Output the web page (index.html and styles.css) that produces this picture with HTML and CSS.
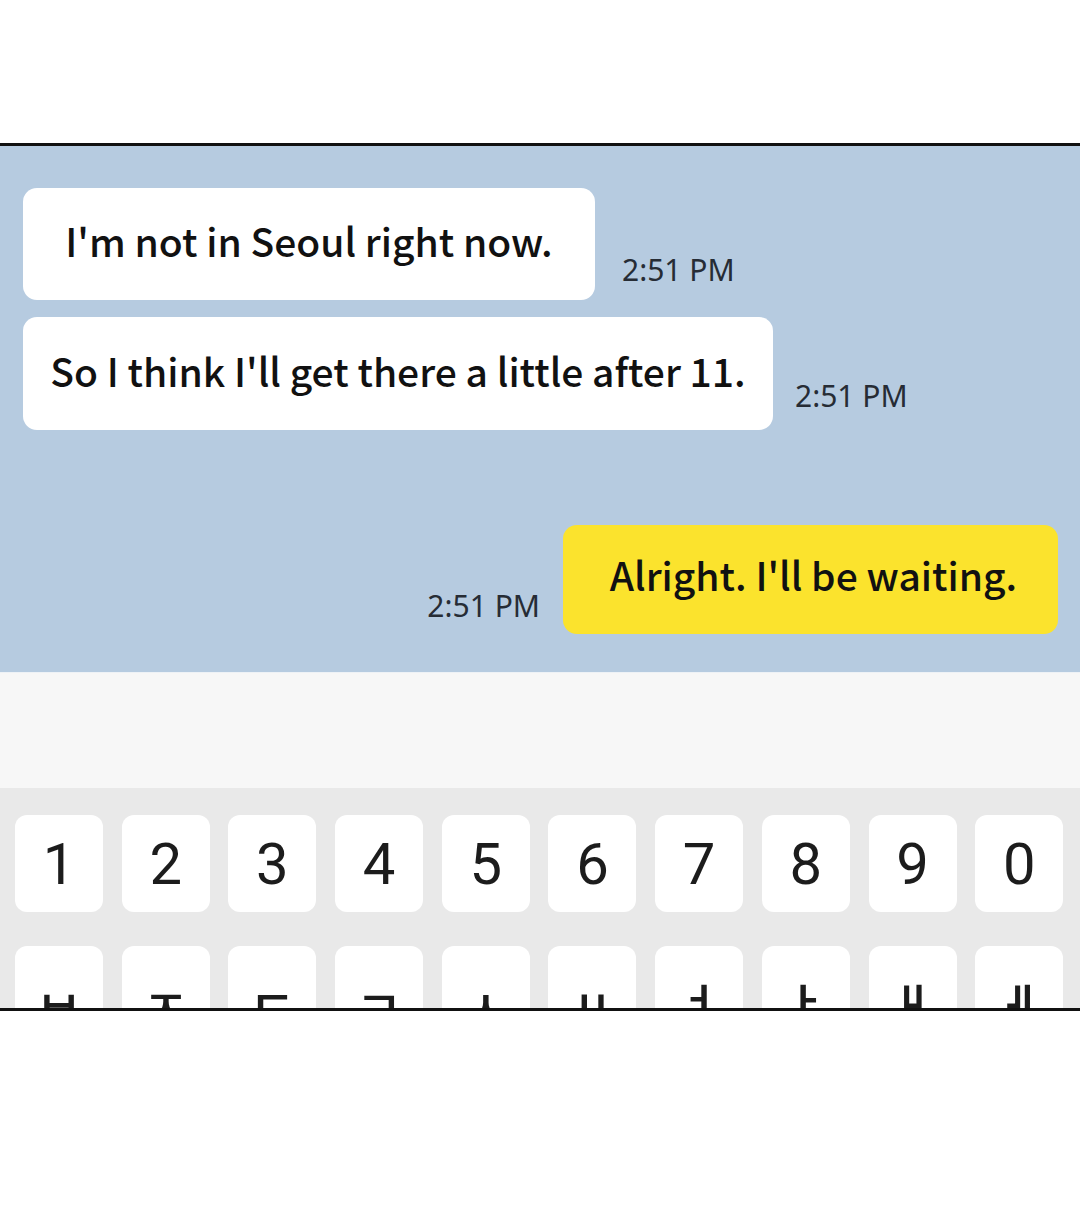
FILE: index.html
```html
<!DOCTYPE html>
<html>
<head>
<meta charset="utf-8">
<link rel="stylesheet" href="styles.css">
</head>
<body>
<div class="top"></div>
<div class="frame">
  <div class="chat">
    <div class="row row-1">
      <div class="bubble in b1">I'm not in Seoul right now.</div>
      <div class="time t1">2:51 PM</div>
    </div>
    <div class="row row-2">
      <div class="bubble in b2">So I think I'll get there a little after 11.</div>
      <div class="time t2">2:51 PM</div>
    </div>
    <div class="row row-3">
      <div class="time t3">2:51 PM</div>
      <div class="bubble out b3">Alright. I'll be waiting.</div>
    </div>
  </div>
  <div class="input"></div>
  <div class="keyboard">
    <div class="keys nums">
      <div class="key">1</div><div class="key">2</div><div class="key">3</div><div class="key">4</div><div class="key">5</div>
      <div class="key">6</div><div class="key">7</div><div class="key">8</div><div class="key">9</div><div class="key">0</div>
    </div>
    <div class="keys hangul">
      <div class="key">ㅂ</div><div class="key">ㅈ</div><div class="key">ㄷ</div><div class="key">ㄱ</div><div class="key">ㅅ</div>
      <div class="key">ㅛ</div><div class="key">ㅕ</div><div class="key">ㅑ</div><div class="key">ㅐ</div><div class="key">ㅔ</div>
    </div>
  </div>
</div>
</body>
</html>
```

FILE: styles.css
```css
* { box-sizing: border-box; }
html, body { margin: 0; padding: 0; background: #fff; }
body { width: 1080px; height: 1205px; overflow: hidden; }
.top { height: 143px; }
.frame {
  height: 868px;
  border-top: 3px solid #111;
  border-bottom: 3px solid #111;
  overflow: hidden;
  display: flex;
  flex-direction: column;
}
.chat {
  flex: 0 0 526px;
  background: #b6cbe0;
  padding: 42px 22px 0 23px;
  display: flex;
  flex-direction: column;
}
.row { display: flex; align-items: flex-end; }
.row-2 { margin-top: 17px; }
.row-3 { margin-top: 95px; justify-content: flex-end; }
.bubble {
  font-family: "Noto Sans CJK KR", "Noto Sans", sans-serif;
  font-weight: 500;
  font-size: 39px;
  color: #111;
  border-radius: 14px;
  display: flex;
  align-items: center;
  justify-content: center;
  white-space: nowrap;
}
.in { background: #fff; }
.out { background: #fbe32d; }
.b1 { width: 572px; height: 112px; padding-bottom: 8px; }
.b2 { width: 750px; height: 113px; padding-bottom: 8px; }
.b3 { width: 495px; height: 109px; padding-bottom: 12px; padding-left: 6px; }
.time {
  font-family: "Noto Sans", sans-serif;
  font-size: 30px;
  color: #262c35;
  white-space: nowrap;
}
.t1 { margin-left: 27px; margin-bottom: 10px; }
.t2 { margin-left: 22px; margin-bottom: 14px; }
.t3 { margin-right: 23px; margin-bottom: 8px; }
.input { flex: 0 0 116px; background: #f7f7f7; border-top: 1px solid #eef2f6; }
.keyboard {
  flex: 1 1 auto;
  min-height: 0;
  overflow: hidden;
  background: #e9e9e9;
  padding: 27px 0 0 15px;
}
.keys {
  display: grid;
  grid-template-columns: repeat(10, 88px);
  column-gap: 18.7px;
}
.key {
  background: #fff;
  border-radius: 12px;
  height: 97px;
  display: flex;
  justify-content: center;
  color: #1c1c1c;
}
.nums .key {
  font-family: Roboto, "Noto Sans", sans-serif;
  font-weight: 400;
  font-size: 58px;
  align-items: center;
}
.hangul { margin-top: 34px; }
.hangul .key {
  font-family: "Noto Sans CJK KR", sans-serif;
  font-weight: 500;
  font-size: 52px;
  line-height: 1;
  padding-top: 34px;
}
```
